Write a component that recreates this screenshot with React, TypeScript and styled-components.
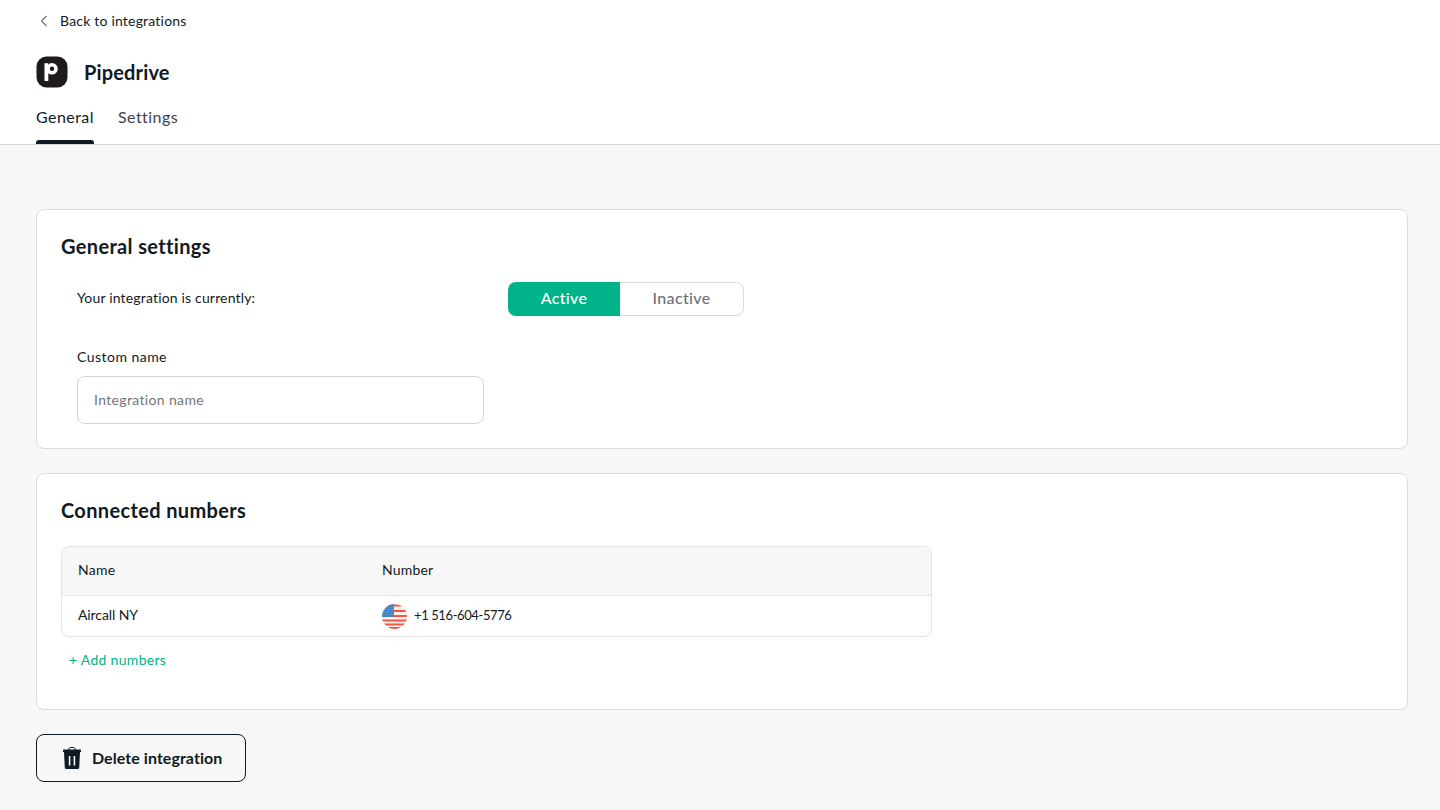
import React from 'react';
import styled, { createGlobalStyle } from 'styled-components';

const GlobalStyle = createGlobalStyle`
  html, body {
    margin: 0;
    padding: 0;
    background: #f7f7f7;
  }
  * {
    box-sizing: border-box;
  }
  body {
    font-family: 'Lato', 'Liberation Sans', sans-serif;
    color: #111a24;
  }
`;

const FLAG_STRIPES = [0.5, 6, 11, 15.5, 19.5, 23];
const FLAG_STARS = [1.5, 4, 6.5, 9];

const App = () => (
  <>
    <GlobalStyle />
    <Page>
      <Header>
        <BackLink>
          <svg width="16" height="16" viewBox="0 0 16 16" fill="none">
            <path d="M10.5 3 L5.5 8 L10.5 13" stroke="#6d7178" strokeWidth="1.2" />
          </svg>
          <BackText>Back to integrations</BackText>
        </BackLink>
        <TitleRow>
          <Logo>
            <svg width="32" height="32" viewBox="0 0 32 32">
              <rect x="0.5" y="0.5" width="31" height="31" rx="10" fill="#1f1b1a" />
              <circle cx="16" cy="12.8" r="4" fill="none" stroke="#fff" strokeWidth="3.6" />
              <path d="M12.2 6.5h1.6l-1.600 2.200Z" fill="#1f1b1a" />
              <rect x="8.5" y="7.2" width="3.8" height="17.8" fill="#fff" />
            </svg>
          </Logo>
          <Title>Pipedrive</Title>
        </TitleRow>
        <Tabs>
          <Tab $active>General</Tab>
          <Tab>Settings</Tab>
        </Tabs>
      </Header>

      <Content>
        <Card $height={240}>
          <CardTitle>General settings</CardTitle>
          <StatusRow>
            <StatusLabel>Your integration is currently:</StatusLabel>
            <Toggle>
              <ToggleOption $on>Active</ToggleOption>
              <ToggleOption>Inactive</ToggleOption>
            </Toggle>
          </StatusRow>
          <NameField>
            <NameLabel>Custom name</NameLabel>
            <NameInput placeholder="Integration name" />
          </NameField>
        </Card>

        <Card $height={237}>
          <CardTitle>Connected numbers</CardTitle>
          <NumbersTable>
            <TableHead>
              <NameCell>Name</NameCell>
              <HeadCell>Number</HeadCell>
            </TableHead>
            <TableRow>
              <NameCell $tight>Aircall NY</NameCell>
              <NumberCell>
                <svg width="25" height="25" viewBox="0 0 25 25">
                  <defs>
                    <clipPath id="flag-circle">
                      <circle cx="12.5" cy="12.5" r="12.5" />
                    </clipPath>
                  </defs>
                  <g clipPath="url(#flag-circle)">
                    <rect width="25" height="25" fill="#fdf1ee" />
                    {FLAG_STRIPES.map((y) => (
                      <rect key={y} y={y} width="25" height="2" fill="#f4563f" />
                    ))}
                    <rect width="12" height="13" fill="#3f84c4" />
                    {FLAG_STARS.map((y) =>
                      [1.5, 4, 6.5, 9, 11].map((x) => (
                        <circle key={`${x}-${y}`} cx={x} cy={y + 1.5} r="0.5" fill="#8fb9e0" />
                      )),
                    )}
                  </g>
                </svg>
                <NumberText>+1 516-604-5776</NumberText>
              </NumberCell>
            </TableRow>
          </NumbersTable>
          <AddNumbers>+ Add numbers</AddNumbers>
        </Card>

        <DeleteButton>
          <svg width="18" height="22" viewBox="0 0 18 22">
            <path d="M6 3V1.800C6 1 6.700.5 7.400.5h3.200c.7 0 1.400.5 1.400 1.300V3" fill="none" stroke="#111a24" />
            <path d="M1 2.500h16c.6 0 1 .4 1 1V5H0V3.500c0-.6.4-1 1-1Z" fill="#111a24" />
            <path
              fill="#111a24"
              fillRule="evenodd"
              d="M1 5h16l-.8 15.500c0 .9-.7 1.500-1.500 1.500H3.300c-.8 0-1.500-.6-1.500-1.500L1 5Zm4.800 4v9.500h1.600V9H5.800Zm4.800 0v9.500h1.600V9h-1.600Z"
            />
          </svg>
          <span>Delete integration</span>
        </DeleteButton>
      </Content>
    </Page>
  </>
);

const Page = styled.div`
  min-height: 810px;
  display: flex;
  flex-direction: column;
`;

const Header = styled.header`
  height: 145px;
  background: #fff;
  border-bottom: 1px solid #d9d9d9;
  padding: 13px 36px 0;
  display: flex;
  flex-direction: column;
`;

const BackLink = styled.a`
  display: flex;
  align-items: center;
  gap: 8px;
  height: 16px;
  font-size: 14px;
`;

const BackText = styled.span`
  letter-spacing: 0.2px;
  padding-bottom: 2px;
`;

const TitleRow = styled.div`
  display: flex;
  align-items: center;
  gap: 16px;
  margin-top: 27px;
`;

const Logo = styled.div`
  width: 32px;
  height: 32px;
  line-height: 0;
`;

const Title = styled.h1`
  margin: 0;
  font-size: 20px;
  font-weight: 700;
  letter-spacing: 0.15px;
`;

const Tabs = styled.nav`
  display: flex;
  gap: 24px;
  margin-top: 14px;
  flex: 1;
`;

const Tab = styled.div<{ $active?: boolean }>`
  position: relative;
  padding-top: 5px;
  font-size: 16px;
  line-height: 20px;
  letter-spacing: 0.45px;
  color: ${({ $active }) => ($active ? '#111a24' : '#3d444d')};

  ${({ $active }) =>
    $active &&
    `
    &::after {
      content: '';
      position: absolute;
      left: 0;
      right: 0;
      bottom: 0;
      height: 4px;
      background: #111a24;
      border-radius: 3px 3px 0 0;
    }
  `}
`;

const Content = styled.main`
  padding: 64px 32px 0 36px;
  display: flex;
  flex-direction: column;
  gap: 24px;
  align-items: stretch;
`;

const Card = styled.section<{ $height: number }>`
  height: ${({ $height }) => $height}px;
  background: #fff;
  border: 1px solid #dcdcdc;
  border-radius: 8px;
  padding: 24px;
`;

const CardTitle = styled.h2`
  margin: 0;
  font-size: 20px;
  line-height: 24px;
  font-weight: 700;
  letter-spacing: 0.35px;
`;

const StatusRow = styled.div`
  display: flex;
  align-items: center;
  margin: 24px 0 0 16px;
`;

const StatusLabel = styled.label`
  display: block;
  width: 431px;
  padding-bottom: 4px;
  font-size: 14px;
  letter-spacing: 0.17px;
`;

const Toggle = styled.div`
  display: flex;
  width: 236px;
  height: 34px;
`;

const ToggleOption = styled.div<{ $on?: boolean }>`
  flex: ${({ $on }) => ($on ? '0 0 112px' : '1')};
  display: flex;
  align-items: center;
  justify-content: center;
  padding-bottom: 3px;
  font-size: 16px;
  font-weight: 500;
  letter-spacing: 0.35px;
  color: ${({ $on }) => ($on ? '#fff' : '#6d7178')};
  background: ${({ $on }) => ($on ? '#00b388' : '#fff')};
  border: ${({ $on }) => ($on ? 'none' : '1px solid #dcdcdc')};
  border-left: none;
  border-radius: ${({ $on }) => ($on ? '8px 0 0 8px' : '0 8px 8px 0')};
`;

const NameField = styled.div`
  margin: 32px 0 0 16px;
`;

const NameLabel = styled.label`
  display: block;
  font-size: 14px;
  letter-spacing: 0.47px;
`;

const NameInput = styled.input`
  display: block;
  width: 407px;
  height: 48px;
  margin-top: 11px;
  padding: 0 16px 2px;
  border: 1px solid #d3d3d3;
  border-radius: 8px;
  outline: none;
  font-family: inherit;
  font-size: 14px;
  letter-spacing: 0.35px;

  ::placeholder {
    color: #80848a;
  }
`;

const NumbersTable = styled.div`
  width: 871px;
  margin-top: 24px;
  border: 1px solid #e3e3e3;
  border-radius: 8px;
  overflow: hidden;
  font-size: 14px;
  letter-spacing: 0.2px;
`;

const TableHead = styled.div`
  display: flex;
  align-items: center;
  height: 49px;
  background: #f7f7f7;
  border-bottom: 1px solid #e3e3e3;
`;

const TableRow = styled.div`
  display: flex;
  align-items: center;
  height: 40px;
`;

const NameCell = styled.div<{ $tight?: boolean }>`
  width: 320px;
  padding: 0 0 4px 16px;
  letter-spacing: ${({ $tight }) => ($tight ? '-0.1px' : '0.3px')};
`;

const HeadCell = styled.div`
  padding-bottom: 4px;
`;

const NumberCell = styled.div`
  display: flex;
  align-items: center;
  gap: 7px;
`;

const NumberText = styled.span`
  padding-bottom: 2px;
  font-size: 13px;
  letter-spacing: -0.4px;
`;

const AddNumbers = styled.a`
  display: block;
  margin: 14px 0 0 8px;
  font-size: 14px;
  line-height: 18px;
  letter-spacing: 0.3px;
  color: #00b388;
`;

const DeleteButton = styled.button`
  display: flex;
  align-items: center;
  gap: 11px;
  width: 210px;
  height: 48px;
  padding: 0 0 0 26px;
  background: transparent;
  border: 1px solid #111a24;
  border-radius: 8px;
  font-family: inherit;
  font-size: 16px;
  font-weight: 700;
  letter-spacing: 0.06px;
  white-space: nowrap;
  color: #111a24;

  span {
    padding-bottom: 2px;
  }
`;

export default App;
